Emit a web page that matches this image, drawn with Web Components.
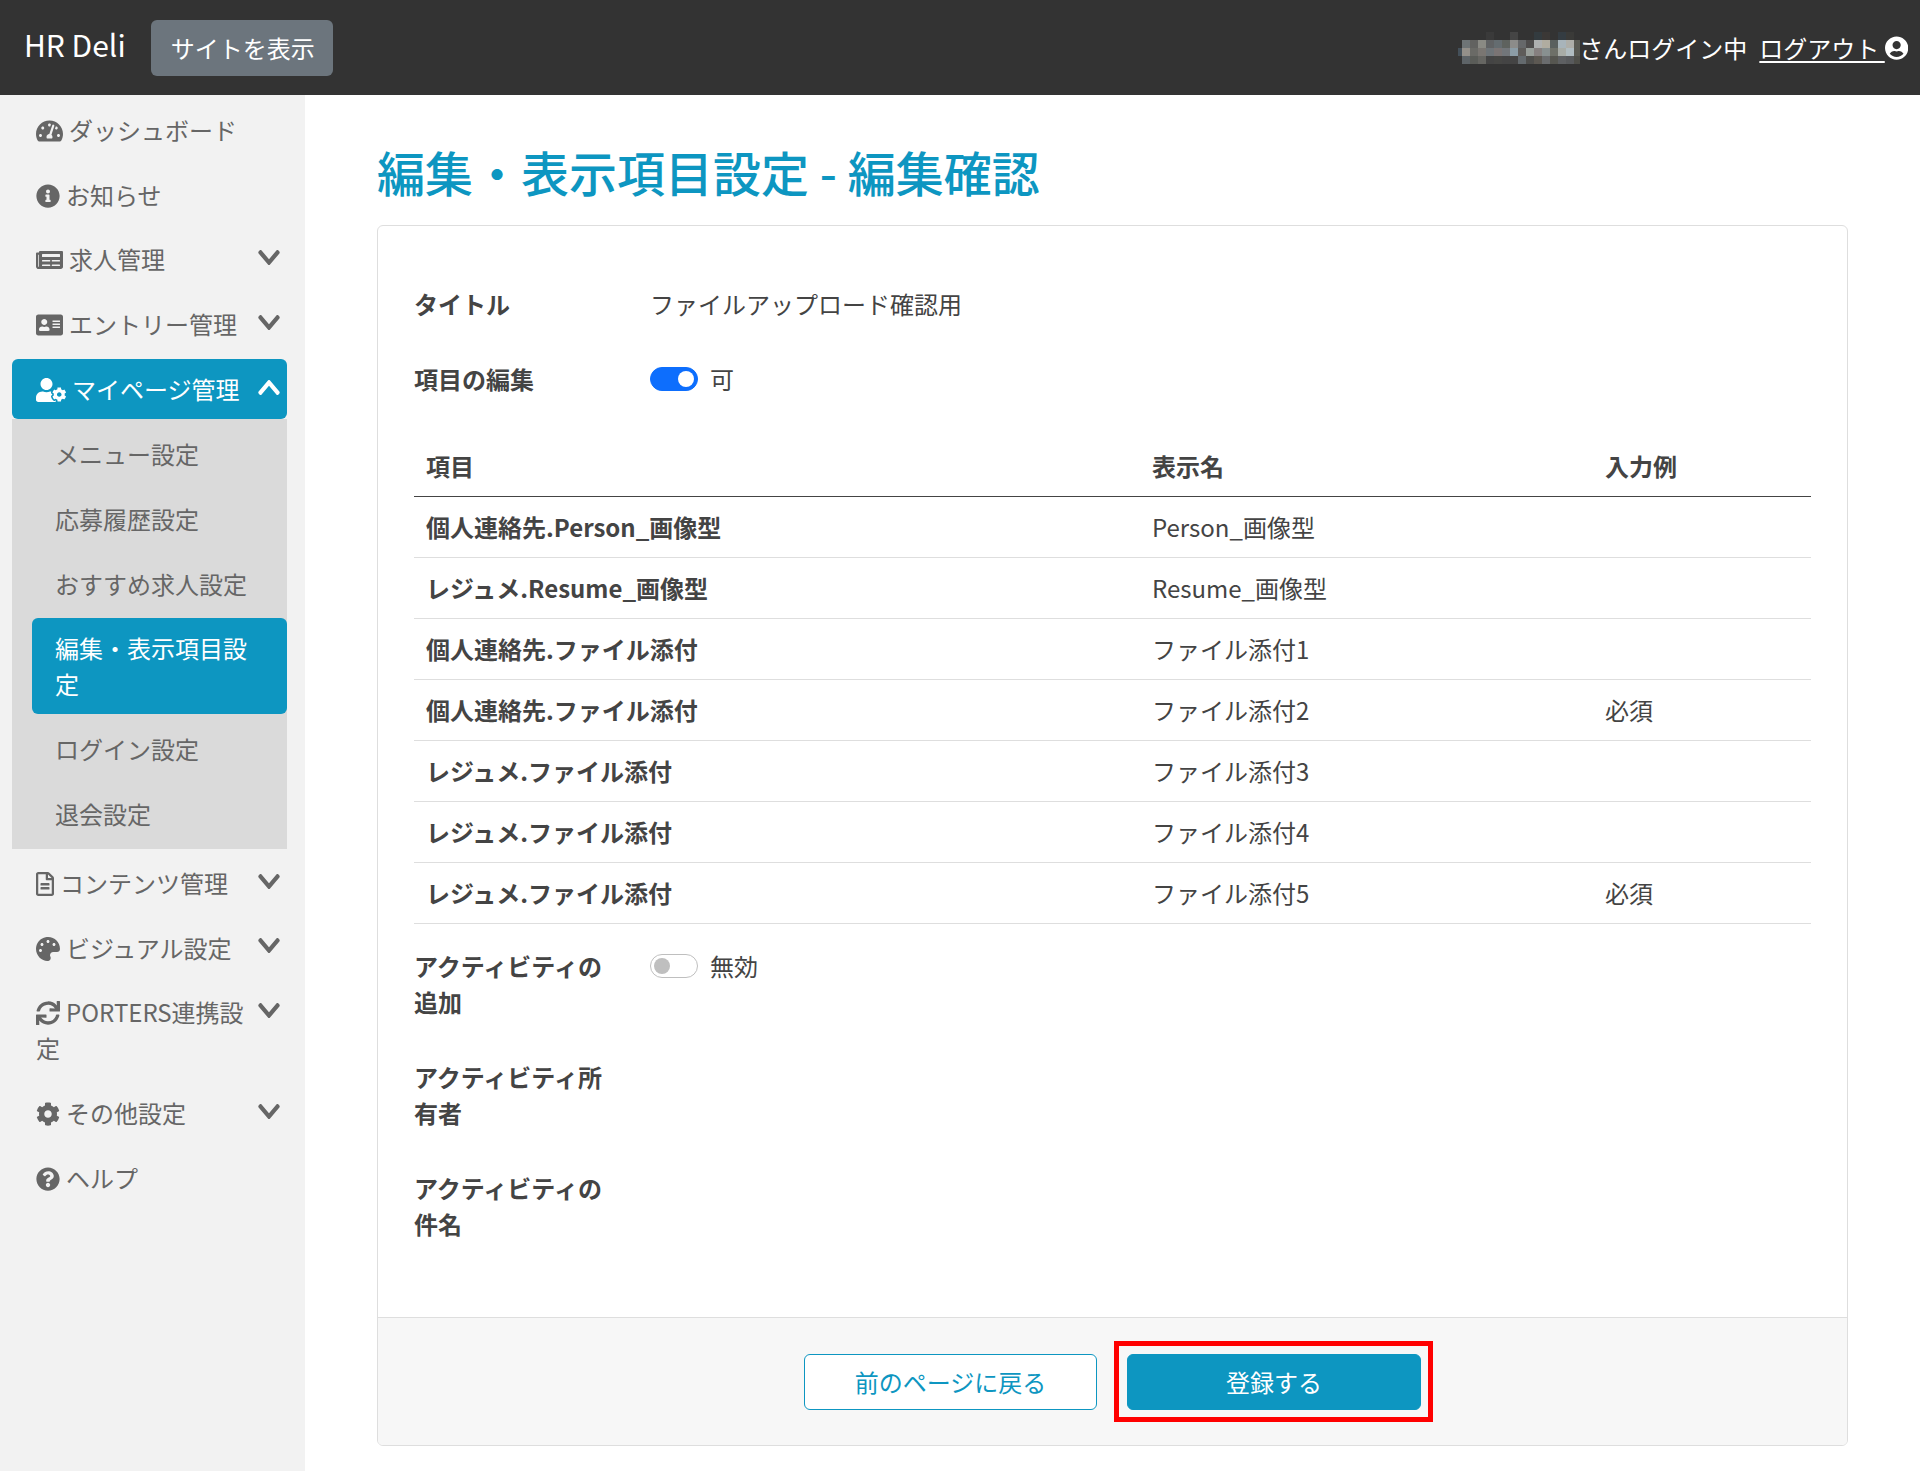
<!DOCTYPE html>
<html lang="ja">
<head>
<meta charset="utf-8">
<title>HR Deli</title>
<style>
html,body{margin:0;padding:0;background:#fff}
body{font:400 24px/36px "Noto Sans CJK JP","Noto Sans",sans-serif;color:#444}
</style>
</head>
<body>
<hr-app>
  <hr-header slot="header"></hr-header>
  <hr-sidenav slot="nav">
    <nav-item icon="tachometer">ダッシュボード</nav-item>
    <nav-item icon="info">お知らせ</nav-item>
    <nav-item icon="newspaper" chevron="down">求人管理</nav-item>
    <nav-item icon="idcard" chevron="down">エントリー管理</nav-item>
    <nav-item icon="usercog" chevron="up" active>マイページ管理</nav-item>
    <nav-group>
      <sub-item>メニュー設定</sub-item>
      <sub-item>応募履歴設定</sub-item>
      <sub-item>おすすめ求人設定</sub-item>
      <sub-item active>編集・表示項目設定</sub-item>
      <sub-item>ログイン設定</sub-item>
      <sub-item>退会設定</sub-item>
    </nav-group>
    <nav-item icon="file" chevron="down">コンテンツ管理</nav-item>
    <nav-item icon="palette" chevron="down">ビジュアル設定</nav-item>
    <nav-item icon="sync" chevron="down">PORTERS連携設定</nav-item>
    <nav-item icon="cog" chevron="down">その他設定</nav-item>
    <nav-item icon="question">ヘルプ</nav-item>
  </hr-sidenav>
  <page-title>編集・表示項目設定 - 編集確認</page-title>
  <page-card>
    <form-row label="タイトル">ファイルアップロード確認用</form-row>
    <form-row label="項目の編集"><toggle-switch on>可</toggle-switch></form-row>
    <item-table></item-table>
    <form-row label="アクティビティの追加"><toggle-switch>無効</toggle-switch></form-row>
    <form-row label="アクティビティ所有者"></form-row>
    <form-row label="アクティビティの件名"></form-row>
    <card-footer slot="footer">
      <hr-button variant="outline">前のページに戻る</hr-button>
      <hr-button variant="primary" marked>登録する</hr-button>
    </card-footer>
  </page-card>
</hr-app>

<script>
const ICONS = {
  tachometer:[576,"M288 32C128.94 32 0 160.94 0 320c0 52.8 14.25 102.26 39.06 144.8 5.61 9.62 16.3 15.2 27.44 15.2h443c11.14 0 21.83-5.58 27.44-15.2C561.75 422.26 576 372.8 576 320c0-159.06-128.94-288-288-288zm0 64c14.71 0 26.58 10.13 30.32 23.65-1.11 2.26-2.64 4.23-3.45 6.67l-9.22 27.67c-5.13 3.49-10.97 6.01-17.64 6.01-17.67 0-32-14.33-32-32S270.33 96 288 96zM96 384c-17.67 0-32-14.33-32-32s14.33-32 32-32 32 14.33 32 32-14.33 32-32 32zm48-160c-17.67 0-32-14.33-32-32s14.33-32 32-32 32 14.33 32 32-14.33 32-32 32zm246.77-72.41l-61.33 184C343.13 347.33 352 364.54 352 384c0 11.72-3.38 22.55-8.88 32H232.88c-5.5-9.45-8.88-20.28-8.88-32 0-33.94 26.5-61.43 59.9-63.59l61.34-184.01c4.17-12.56 17.73-19.45 30.36-15.17 12.57 4.19 19.35 17.79 15.17 30.36zm14.66 57.2l15.52-46.55c3.47-1.29 7.13-2.23 11.05-2.23 17.67 0 32 14.33 32 32s-14.33 32-32 32c-11.38-.01-20.89-6.28-26.57-15.22zM480 384c-17.67 0-32-14.33-32-32s14.33-32 32-32 32 14.33 32 32-14.33 32-32 32z"],
  info:[512,"M256 8C119.043 8 8 119.083 8 256c0 136.997 111.043 248 248 248s248-111.003 248-248C504 119.083 392.957 8 256 8zm0 110c23.196 0 42 18.804 42 42s-18.804 42-42 42-42-18.804-42-42 18.804-42 42-42zm56 254c0 6.627-5.373 12-12 12h-88c-6.627 0-12-5.373-12-12v-24c0-6.627 5.373-12 12-12h12v-64h-12c-6.627 0-12-5.373-12-12v-24c0-6.627 5.373-12 12-12h64c6.627 0 12 5.373 12 12v100h12c6.627 0 12 5.373 12 12v24z"],
  question:[512,"M504 256c0 136.997-111.043 248-248 248S8 392.997 8 256C8 119.083 119.043 8 256 8s248 111.083 248 248zM262.655 90c-54.497 0-89.255 22.957-116.549 63.758-3.536 5.286-2.353 12.415 2.715 16.258l34.699 26.31c5.205 3.947 12.621 3.008 16.665-2.122 17.864-22.658 30.113-35.797 57.303-35.797 20.429 0 45.698 13.148 45.698 32.958 0 14.976-12.363 22.667-32.534 33.976C247.128 238.528 216 254.941 216 296v4c0 6.627 5.373 12 12 12h56c6.627 0 12-5.373 12-12v-1.333c0-28.462 83.186-29.647 83.186-106.667 0-58.002-60.165-102-116.531-102zM256 338c-25.365 0-46 20.635-46 46 0 25.364 20.635 46 46 46s46-20.636 46-46c0-25.365-20.635-46-46-46z"],
  down:[448,"M207.029 381.476L12.686 187.132c-9.373-9.373-9.373-24.569 0-33.941l22.667-22.667c9.357-9.357 24.522-9.375 33.901-.04L224 284.505l154.745-154.021c9.379-9.335 24.544-9.317 33.901.04l22.667 22.667c9.373 9.373 9.373 24.569 0 33.941L240.971 381.476c-9.373 9.372-24.569 9.372-33.942 0z"],
  up:[448,"M240.971 130.524l194.343 194.343c9.373 9.373 9.373 24.569 0 33.941l-22.667 22.667c-9.357 9.357-24.522 9.375-33.901.04L224 227.495 69.255 381.516c-9.379 9.335-24.544 9.317-33.901-.04l-22.667-22.667c-9.373-9.373-9.373-24.569 0-33.941L207.03 130.525c9.372-9.373 24.568-9.373 33.941-.001z"],
  user:[496,"M248 8C111 8 0 119 0 256s111 248 248 248 248-111 248-248S385 8 248 8zm0 96c48.6 0 88 39.4 88 88s-39.4 88-88 88-88-39.4-88-88 39.4-88 88-88zm0 344c-58.7 0-111.3-26.6-146.5-68.2 18.8-35.4 55.6-59.8 98.5-59.8 2.4 0 4.8.4 7.1 1.1 13 4.2 26.6 6.9 40.9 6.9 14.3 0 28-2.7 40.9-6.9 2.3-.7 4.7-1.1 7.1-1.1 42.9 0 79.7 24.4 98.5 59.8C359.3 421.4 306.7 448 248 448z"],
  sync:[512,"M440.65 12.57l4 82.77A247.16 247.16 0 0 0 255.83 8C134.73 8 33.91 94.92 12.29 209.82A12 12 0 0 0 24.09 224h49.05a12 12 0 0 0 11.67-9.26 175.91 175.91 0 0 1 317-56.94l-101.46-4.86a12 12 0 0 0-12.57 12v47.41a12 12 0 0 0 12 12H500a12 12 0 0 0 12-12V12a12 12 0 0 0-12-12h-47.37a12 12 0 0 0-11.98 12.57zM255.83 432a175.61 175.61 0 0 1-146-77.8l101.8 4.87a12 12 0 0 0 12.57-12v-47.4a12 12 0 0 0-12-12H12a12 12 0 0 0-12 12V500a12 12 0 0 0 12 12h47.35a12 12 0 0 0 12-12.6l-4.15-82.57A247.17 247.17 0 0 0 255.83 504c121.11 0 221.93-86.92 243.55-201.82a12 12 0 0 0-11.8-14.18h-49.05a12 12 0 0 0-11.67 9.26A175.86 175.86 0 0 1 255.83 432z"],
  cog:[512,"M487.4 315.7l-42.6-24.6c4.3-23.2 4.3-47 0-70.2l42.6-24.6c4.9-2.8 7.1-8.6 5.5-14-11.1-35.6-30-67.8-54.7-94.6-3.8-4.1-10-5.1-14.8-2.3L380.8 110c-17.9-15.4-38.5-27.3-60.8-35.1V25.8c0-5.6-3.9-10.5-9.4-11.7-36.7-8.2-74.3-7.8-109.2 0-5.5 1.2-9.4 6.1-9.4 11.7V75c-22.2 7.9-42.8 19.8-60.8 35.1L88.7 85.5c-4.9-2.8-11-1.9-14.8 2.3-24.7 26.7-43.6 58.9-54.7 94.6-1.7 5.4.6 11.2 5.5 14L67.3 221c-4.3 23.2-4.3 47 0 70.2l-42.6 24.6c-4.9 2.8-7.1 8.6-5.5 14 11.1 35.6 30 67.8 54.7 94.6 3.8 4.1 10 5.1 14.8 2.3l42.6-24.6c17.9 15.4 38.5 27.3 60.8 35.1v49.2c0 5.6 3.9 10.5 9.4 11.7 36.7 8.2 74.3 7.8 109.2 0 5.5-1.2 9.4-6.1 9.4-11.7v-49.2c22.2-7.9 42.8-19.8 60.8-35.1l42.6 24.6c4.9 2.8 11 1.9 14.8-2.3 24.7-26.7 43.6-58.9 54.7-94.6 1.5-5.5-.7-11.3-5.6-14.1zM256 336c-44.1 0-80-35.9-80-80s35.9-80 80-80 80 35.9 80 80-35.9 80-80 80z"],
  palette:[512,"M204.3 5C104.9 24.4 24.8 104.3 5.2 203.4c-37 187 131.7 326.4 258.8 306.7 41.2-6.4 61.4-54.6 42.5-91.7-23.1-45.4 9.9-98.4 60.9-98.4h79.7c35.8 0 64.8-29.6 64.9-65.3C511.5 97.1 368.1-26.9 204.3 5zM96 320c-17.7 0-32-14.3-32-32s14.3-32 32-32 32 14.3 32 32-14.3 32-32 32zm32-128c-17.7 0-32-14.3-32-32s14.3-32 32-32 32 14.3 32 32-14.3 32-32 32zm128-64c-17.7 0-32-14.3-32-32s14.3-32 32-32 32 14.3 32 32-14.3 32-32 32zm128 64c-17.7 0-32-14.3-32-32s14.3-32 32-32 32 14.3 32 32-14.3 32-32 32z"],
  idcard:[576,"M528 32H48C21.5 32 0 53.5 0 80v352c0 26.5 21.5 48 48 48h480c26.5 0 48-21.5 48-48V80c0-26.5-21.5-48-48-48zM176 128c35.3 0 64 28.7 64 64s-28.7 64-64 64-64-28.7-64-64 28.7-64 64-64zm112 236.800c0 10.600-10 19.200-22.400 19.200H86.400C74 384 64 375.400 64 364.800v-19.200c0-31.800 30.100-57.600 67.200-57.600h5c12.300 5.100 25.700 8 39.800 8s27.600-2.900 39.800-8h5c37.100 0 67.200 25.800 67.200 57.600v19.200zM512 312c0 4.400-3.600 8-8 8H360c-4.400 0-8-3.600-8-8v-16c0-4.400 3.600-8 8-8h144c4.400 0 8 3.600 8 8v16zm0-64c0 4.400-3.600 8-8 8H360c-4.400 0-8-3.600-8-8v-16c0-4.400 3.600-8 8-8h144c4.400 0 8 3.600 8 8v16zm0-64c0 4.400-3.600 8-8 8H360c-4.400 0-8-3.600-8-8v-16c0-4.400 3.600-8 8-8h144c4.400 0 8 3.600 8 8v16z"],
  newspaper:[576,"M552 64H88c-13.255 0-24 10.745-24 24v8H24c-13.255 0-24 10.745-24 24v272c0 30.928 25.072 56 56 56h472c26.51 0 48-21.49 48-48V88c0-13.255-10.745-24-24-24zM56 400a8 8 0 0 1-8-8V144h16v248a8 8 0 0 1-8 8zm236-16H140c-6.627 0-12-5.373-12-12v-8c0-6.627 5.373-12 12-12h152c6.627 0 12 5.373 12 12v8c0 6.627-5.373 12-12 12zm208 0H348c-6.627 0-12-5.373-12-12v-8c0-6.627 5.373-12 12-12h152c6.627 0 12 5.373 12 12v8c0 6.627-5.373 12-12 12zm-208-96H140c-6.627 0-12-5.373-12-12v-8c0-6.627 5.373-12 12-12h152c6.627 0 12 5.373 12 12v8c0 6.627-5.373 12-12 12zm208 0H348c-6.627 0-12-5.373-12-12v-8c0-6.627 5.373-12 12-12h152c6.627 0 12 5.373 12 12v8c0 6.627-5.373 12-12 12zm0-96H140c-6.627 0-12-5.373-12-12v-40c0-6.627 5.373-12 12-12h360c6.627 0 12 5.373 12 12v40c0 6.627-5.373 12-12 12z"],
  file:[384,"M288 248v28c0 6.600-5.400 12-12 12H108c-6.600 0-12-5.400-12-12v-28c0-6.600 5.400-12 12-12h168c6.600 0 12 5.400 12 12zm-12 72H108c-6.600 0-12 5.400-12 12v28c0 6.600 5.400 12 12 12h168c6.600 0 12-5.400 12-12v-28c0-6.600-5.400-12-12-12zm108-188.100V464c0 26.500-21.500 48-48 48H48c-26.500 0-48-21.500-48-48V48C0 21.500 21.500 0 48 0h204.100C264.800 0 277 5.100 286 14.100L369.900 98c9 8.900 14.100 21.200 14.100 33.900zm-128-80V128h76.100L256 51.900zM336 464V176H232c-13.300 0-24-10.700-24-24V48H48v416h288z"],
  usercog:[640,"M610.500 373.300c2.600-14.100 2.600-28.500 0-42.600l25.800-14.900c3-1.700 4.300-5.200 3.300-8.500-6.700-21.600-18.200-41.200-33.200-57.400-2.300-2.500-6-3.100-9-1.400l-25.800 14.900c-10.900-9.300-23.400-16.500-36.900-21.300v-29.800c0-3.400-2.400-6.400-5.700-7.100-22.300-5-45-4.800-66.200 0-3.300.7-5.700 3.700-5.700 7.100v29.800c-13.500 4.800-26 12-36.900 21.300l-25.800-14.900c-2.900-1.700-6.700-1.100-9 1.400-15 16.200-26.500 35.800-33.200 57.400-1 3.300.4 6.800 3.300 8.500l25.800 14.900c-2.600 14.100-2.600 28.500 0 42.600l-25.800 14.900c-3 1.700-4.300 5.200-3.300 8.500 6.700 21.600 18.200 41.100 33.200 57.400 2.300 2.500 6 3.100 9 1.400l25.800-14.900c10.900 9.300 23.400 16.500 36.900 21.300v29.800c0 3.400 2.400 6.400 5.700 7.100 22.300 5 45 4.800 66.200 0 3.300-.7 5.700-3.700 5.700-7.100v-29.800c13.500-4.800 26-12 36.900-21.300l25.800 14.900c2.900 1.700 6.700 1.100 9-1.400 15-16.200 26.500-35.800 33.200-57.400 1-3.300-.4-6.800-3.300-8.500l-25.800-14.900zM496 400.500c-26.800 0-48.500-21.800-48.500-48.500s21.800-48.500 48.500-48.500 48.500 21.800 48.500 48.500-21.700 48.500-48.500 48.500zM224 256c70.700 0 128-57.300 128-128S294.700 0 224 0 96 57.300 96 128s57.300 128 128 128zm201.200 226.500c-2.300-1.200-4.600-2.600-6.800-3.900l-7.900 4.600c-6 3.400-12.800 5.300-19.600 5.300-10.900 0-21.400-4.600-28.900-12.600-18.300-19.800-32.300-43.900-40.200-69.600-5.500-17.700 1.900-36.400 17.900-45.700l7.900-4.600c-.1-2.600-.1-5.200 0-7.800l-7.900-4.600c-16-9.200-23.400-28-17.900-45.700.9-2.900 2.200-5.800 3.200-8.700-3.800-.3-7.500-1.200-11.400-1.200h-16.700c-22.200 10.200-46.900 16-72.900 16s-50.600-5.800-72.900-16h-16.700C60.200 288 0 348.200 0 422.400V464c0 26.500 21.500 48 48 48h352c10.100 0 19.500-3.200 27.200-8.500-1.200-3.800-2-7.700-2-11.800v-9.200z"]
};
const iconSvg = (name,h=24) => {
  const [w,d] = ICONS[name];
  return `<svg xmlns="http://www.w3.org/2000/svg" viewBox="0 0 ${w} 512" width="${h*w/512}" height="${h}" fill="currentColor" aria-hidden="true"><path d="${d}"/></svg>`;
};
const chevSvg = name => `<svg xmlns="http://www.w3.org/2000/svg" viewBox="0 125 448 262" width="22" height="15" preserveAspectRatio="none" fill="currentColor" aria-hidden="true"><path d="${ICONS[name][1]}"/></svg>`;
class Base extends HTMLElement {
  constructor(){ super(); this.attachShadow({mode:"open"}); }
  connectedCallback(){ if(!this._r){ this._r=true; this.shadowRoot.innerHTML = this.html(); } }
}
customElements.define("hr-app", class extends Base {
  html(){ return `<style>
    :host{display:block;min-height:1471px;}
    .body{display:flex;align-items:stretch;min-height:1376px}
    .nav{flex:0 0 305px;width:305px;background:#f2f2f2}
    .main{flex:1;min-width:0;padding:0 72px 25px 72px}
  </style>
  <slot name="header"></slot>
  <div class="body"><div class="nav"><slot name="nav"></slot></div><div class="main"><slot></slot></div></div>`; }
});
const MOSAIC = [
 [null,null,null,null,"#3a3a3a",null,null,"#454545",null,null,"#333b3f","#3b3836",null,"#343c42","#3a3a38",null],
 [null,"#6e7476","#626260","#8a8a84","#606264","#646c70","#5e625e","#8c8c8a","#66686a","#4e4c4c","#aeb0b0","#b0aca0","#5a605e","#a8b4ba","#aeaea8","#5a5a52"],
 ["#44505a","#94908a","#6a6a66","#7a7672","#6e7478","#7a7474","#72767a","#8b9ca6","#5e5c5a","#989e9a","#868080","#889090","#6e7068","#a8aca6","#b0bcc0","#5a5a52"],
 [null,"#5e6468","#5a5c58","#666662","#444444","#464644","#444444","#444444","#646a6e","#4e4e4c","#5c5852","#6a6c6e","#565650","#5e6062","#585a5c","#4e4e48"]
];
customElements.define("blur-name", class extends Base {
  html(){
    let r="";
    MOSAIC.forEach((row,y)=>row.forEach((c,x)=>{ if(c) r+=`<rect x="${x===0?2:(x*8-2)}" y="${y*8}" width="${x===0?4:8}" height="8" fill="${c}"/>`; }));
    return `<style>:host{display:block;width:124px;height:32px;flex:none}svg{display:block}</style>
    <svg width="124" height="32" viewBox="0 0 124 32" shape-rendering="crispEdges" aria-hidden="true">${r}</svg>`;
  }
});
customElements.define("hr-header", class extends Base {
  html(){ return `<style>
    :host{display:flex;align-items:center;height:95px;background:#333;color:#fff;padding:0 12px 0 24px;box-sizing:border-box}
    .brand{font-size:30px;line-height:45px;margin-right:25px;position:relative;top:-3px;white-space:nowrap}
    .site{display:block;background:#6c757d;color:#fff;border-radius:6px;height:56px;line-height:56px;padding:0 20px;box-sizing:border-box;width:182px;white-space:nowrap}
    .who{margin-left:auto;display:flex;align-items:center;white-space:nowrap;height:36px}
    .login{margin-left:-1px}
    a{color:#fff;margin-left:12px;text-decoration:none;display:flex;align-items:center}
    a span{white-space:pre;text-decoration:underline;text-underline-offset:3px}
    svg{display:block}
  </style>
  <div class="brand">HR Deli</div>
  <div class="site">サイトを表示</div>
  <div class="who"><blur-name></blur-name><span class="login">さんログイン中</span><a href="#"><span>ログアウト </span>${iconSvg("user")}</a></div>`; }
});
customElements.define("hr-sidenav", class extends Base {
  html(){ return `<style>:host{display:block;padding:5px 18px 0 12px;}</style><slot></slot>`; }
});
customElements.define("nav-item", class extends Base {
  html(){
    const chev=this.getAttribute("chevron"), active=this.hasAttribute("active");
    return `<style>
      :host{display:block;margin-bottom:4.7px;color:${active?"#fff":"#666"}}
      .row{display:block;padding:12px 7px 12px 24px;background:${active?"#0d96c1":"transparent"};border-radius:6px}
      .ic svg{vertical-align:-3px;margin-right:6px}
      .ch{float:right;margin:${chev==="up"?9:8.5}px 0 0 8px;height:15px}
      .ch svg{display:block}
    </style><div class="row">${chev?`<span class="ch">${chevSvg(chev)}</span>`:""}<span class="ic">${iconSvg(this.getAttribute("icon"))}</span><slot></slot></div>`;
  }
});
customElements.define("nav-group", class extends Base {
  html(){ return `<style>:host{display:flow-root;background:#dadada;padding:5.2px 0 0;margin:-4.7px 0 4.4px}</style><slot></slot>`; }
});
customElements.define("sub-item", class extends Base {
  html(){
    const a=this.hasAttribute("active");
    return `<style>
      :host{display:block;margin:0 0 4.8px ${a?20:0}px;color:${a?"#fff":"#666"};background:${a?"#0d96c1":"transparent"};border-radius:${a?"6px":"0"};padding:12px 24px 12px ${a?23:43}px}
    </style><slot></slot>`;
  }
});
customElements.define("page-title", class extends Base {
  html(){ return `<style>:host{display:block;font-size:48px;line-height:72px;font-weight:500;color:#0d96c1;padding:40px 0 18px;white-space:nowrap}</style><slot></slot>`; }
});
customElements.define("page-card", class extends Base {
  html(){ return `<style>
    :host{display:block;border:1px solid #dedede;border-radius:6px;overflow:hidden;background:#fff}
    .b{padding:60px 36px 35px;height:1091px;box-sizing:border-box}
  </style><div class="b"><slot></slot></div><slot name="footer"></slot>`; }
});
customElements.define("form-row", class extends Base {
  html(){ return `<style>
    :host{display:flex;margin-bottom:39px}
    .l{flex:0 0 236px;box-sizing:border-box;padding-right:30px;font-weight:700;color:#444}
    .v{flex:1;color:#444}
  </style><div class="l">${this.getAttribute("label")}</div><div class="v"><slot></slot></div>`; }
});
customElements.define("toggle-switch", class extends Base {
  html(){ const on=this.hasAttribute("on");
    return `<style>
      :host{display:flex;align-items:center;gap:12px;height:36px}
      .t{width:48px;height:24px;border-radius:12px;box-sizing:border-box;position:relative;flex:none;
         background:${on?"#0d6efd":"#fff"};border:1px solid ${on?"#0d6efd":"#bfbfbf"}}
      .d{position:absolute;top:3px;${on?"right:3px":"left:3px"};width:16px;height:16px;border-radius:50%;background:${on?"#fff":"#bfbfbf"}}
    </style><span class="t"><span class="d"></span></span><span><slot></slot></span>`; }
});
const ROWS=[
 ["個人連絡先.Person_画像型","Person_画像型",""],
 ["レジュメ.Resume_画像型","Resume_画像型",""],
 ["個人連絡先.ファイル添付","ファイル添付1",""],
 ["個人連絡先.ファイル添付","ファイル添付2","必須"],
 ["レジュメ.ファイル添付","ファイル添付3",""],
 ["レジュメ.ファイル添付","ファイル添付4",""],
 ["レジュメ.ファイル添付","ファイル添付5","必須"]
];
customElements.define("item-table", class extends Base {
  html(){ return `<style>
    :host{display:block;margin:0 0 24px}
    table{border-collapse:separate;border-spacing:0;width:100%;table-layout:fixed;color:#444}
    th,td{padding:12px;text-align:left;border-bottom:1px solid #dedede}
    th{font-weight:700;border-bottom-color:#444}
    td:first-child{font-weight:700}
  </style><table>
  <colgroup><col style="width:726px"><col style="width:453px"><col></colgroup>
  <thead><tr><th>項目</th><th>表示名</th><th>入力例</th></tr></thead>
  <tbody>${ROWS.map(r=>`<tr><td>${r[0]}</td><td>${r[1]}</td><td>${r[2]}</td></tr>`).join("")}</tbody></table>`; }
});
customElements.define("card-footer", class extends Base {
  html(){ return `<style>
    :host{display:flex;justify-content:center;gap:30px;align-items:center;height:128px;background:#f7f7f7;border-top:1px solid #dedede;box-sizing:border-box}
  </style><slot></slot>`; }
});
customElements.define("hr-button", class extends Base {
  html(){ const p=this.getAttribute("variant")==="primary", m=this.hasAttribute("marked");
    return `<style>
      :host{display:block;position:relative;width:${p?294:293}px;height:56px;box-sizing:border-box;border-radius:6px;text-align:center;line-height:54px;
        border:1px solid #0d96c1;background:${p?"#0d96c1":"#fff"};color:${p?"#fff":"#0d96c1"}}
      .mark{position:absolute;left:-14px;right:-13px;top:-14px;bottom:-13px;border:5px solid #f00;}
    </style><slot></slot>${m?'<span class="mark"></span>':""}`; }
});
</script>
</body>
</html>
